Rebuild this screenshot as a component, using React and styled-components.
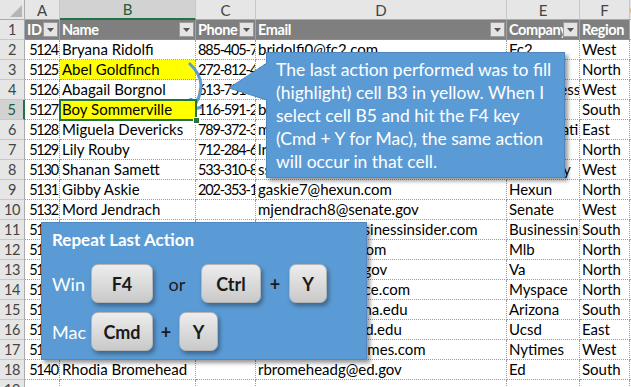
import React from "react";
import styled, { createGlobalStyle } from "styled-components";

const GlobalStyle = createGlobalStyle`
  html, body { margin: 0; padding: 0; background: #fff; }
  body { font-family: "Lato", "Liberation Sans", sans-serif; }
`;

const LETTERS = ["A", "B", "C", "D", "E", "F", "G"];
const HEADERS = ["ID", "Name", "Phone", "Email", "Company", "Region"];

const ROWS = [
	[5124, "Bryana Ridolfi", "885-405-7294", "bridolfi0@fc2.com", "Fc2", "West"],
	[5125, "Abel Goldfinch", "272-812-4410", "dgoldfinch1@google.cn", "Google", "North"],
	[5126, "Abagail Borgnol", "613-751-0935", "aborgnol2@wordpress.com", "Wordpress", "West"],
	[5127, "Boy Sommerville", "116-591-2306", "bsommerville3@tiny.cc", "Tiny", "South"],
	[5128, "Miguela Devericks", "789-372-3568", "mdevericks4@technorati.com", "Technorati", "East"],
	[5129, "Lily Rouby", "712-284-6120", "lrouby5@lycos.com", "Lycos", "North"],
	[5130, "Shanan Samett", "533-310-8823", "ssamett6@usatoday.com", "Usatoday", "West"],
	[5131, "Gibby Askie", "202-353-1947", "gaskie7@hexun.com", "Hexun", "North"],
	[5132, "Mord Jendrach", "", "mjendrach8@senate.gov", "Senate", "West"],
	[5133, "Tamar Crossfield", "418-220-5391", "tcrossfield9@businessinsider.com", "Businessinsider", "South"],
	[5134, "Bram Haggata", "", "bhaggata@mlb.com", "Mlb", "North"],
	[5135, "Gale Cardenas", "347-118-0072", "gcardenasb@va.gov", "Va", "North"],
	[5136, "Mia Doak", "", "mdoakc@myspace.com", "Myspace", "North"],
	[5137, "Lon Petrashko", "602-994-1185", "lpetrashd@arizona.edu", "Arizona", "South"],
	[5138, "Tess McGaughe", "", "tmcgaughe@ucsd.edu", "Ucsd", "East"],
	[5139, "Cy Brammer", "915-402-6638", "cbrammerf@nytimes.com", "Nytimes", "West"],
	[5140, "Rhodia Bromehead", "", "rbromeheadg@ed.gov", "Ed", "South"],
	["", "", "", "", "", ""],
];

export default function App() {
	return (
		<>
			<GlobalStyle />
			<Sheet>
				<Corner>
					<svg width="12" height="12" viewBox="0 0 12 12">
						<polygon points="12,0 12,12 0,12" fill="#b5b5b5" />
					</svg>
				</Corner>
				{LETTERS.map((l) => (
					<ColHead key={l} $sel={l === "B"}>{l}</ColHead>
				))}

				<RowNum>1</RowNum>
				{HEADERS.map((h, i) => (
					<HeadCell key={h}>
						<span>{h}</span>
						{i < 5 && (
							<FilterBtn>
								<svg width="7" height="4" viewBox="0 0 7 4">
									<polygon points="0,0 7,0 3.5,4" fill="#555" />
								</svg>
							</FilterBtn>
						)}
					</HeadCell>
				))}
				<Cell />

				{ROWS.map((r, i) => {
					const n = i + 2;
					return (
						<React.Fragment key={n}>
							<RowNum $sel={n === 5}>{n}</RowNum>
							<Cell $right $num>{r[0]}</Cell>
							<Cell $fill={n === 3 || n === 5} $active={n === 5}>{r[1]}</Cell>
							<Cell $num>{r[2]}</Cell>
							<Cell>{r[3]}</Cell>
							<Cell>{r[4]}</Cell>
							<Cell>{r[5]}</Cell>
							<Cell />
						</React.Fragment>
					);
				})}

				<Arrow width="631" height="387" viewBox="0 0 631 387">
					<path d="M189 63 Q 212 84 191 110" fill="none" stroke="#5b9bd5" strokeWidth="3" />
					<polyline points="191,98 190,110 202,107" fill="none" stroke="#5b9bd5" strokeWidth="3" strokeLinejoin="miter" />
				</Arrow>

				<Note>
					<Pointer width="41" height="60" viewBox="0 0 41 60">
						<polygon points="41,9 1,35 41,48" fill="#5b9bd5" />
						<polyline points="39,10 1,35 39,47" fill="none" stroke="#4f86bd" strokeWidth="1" />
					</Pointer>
					<Line>The last action performed was to fill</Line>
					<Line>(highlight) cell B3 in yellow. When I</Line>
					<Line>select cell B5 and hit the F4 key</Line>
					<Line>(Cmd + Y for Mac), the same action</Line>
					<Line>will occur in that cell.</Line>
				</Note>

				<ShortcutBox>
					<Title>Repeat Last Action</Title>
					<KeyRow>
						<Label>Win</Label>
						<Key $w={62}>F4</Key>
						<Op $w={48}>or</Op>
						<Key $w={60}>Ctrl</Key>
						<Op $w={28} $bold>+</Op>
						<Key $w={38}>Y</Key>
					</KeyRow>
					<KeyRow $gap={9}>
						<Label>Mac</Label>
						<Key $w={62}>Cmd</Key>
						<Op $w={26} $bold>+</Op>
						<Key $w={39}>Y</Key>
					</KeyRow>
				</ShortcutBox>
			</Sheet>
		</>
	);
}

const Sheet = styled.div`
	position: relative;
	width: 631px;
	height: 387px;
	overflow: hidden;
	display: grid;
	grid-template-columns: 25px 35px 136px 60px 251px 73px 50px 1fr;
	grid-auto-rows: 20px;
	font-size: 15px;
	color: #000;
`;

const Corner = styled.div`
	background: #e6e6e6;
	border-right: 1px solid #ababab;
	border-bottom: 1px solid #ababab;
	display: flex;
	align-items: flex-end;
	justify-content: flex-end;
	padding: 0 2px 2px 0;
	box-sizing: border-box;
`;

const ColHead = styled.div`
	background: ${(p) => (p.$sel ? "#d2d2d2" : "#e6e6e6")};
	color: ${(p) => (p.$sel ? "#1f5c38" : "#444")};
	border-right: 1px solid #c8c8c8;
	border-bottom: ${(p) => (p.$sel ? "2px solid #217346" : "1px solid #ababab")};
	box-sizing: border-box;
	display: flex;
	align-items: center;
	justify-content: center;
	font-size: 15px;
`;

const RowNum = styled.div`
	background: ${(p) => (p.$sel ? "#d2d2d2" : "#e6e6e6")};
	color: ${(p) => (p.$sel ? "#1f5c38" : "#444")};
	border-right: ${(p) => (p.$sel ? "2px solid #217346" : "1px solid #ababab")};
	border-bottom: 1px solid #c8c8c8;
	box-sizing: border-box;
	display: flex;
	align-items: center;
	justify-content: center;
	font-size: 14.5px;
	letter-spacing: -0.5px;
`;

const HeadCell = styled.div`
	background: #7f7f7f;
	color: #fff;
	font-weight: 700;
	font-size: 14.5px;
	letter-spacing: -0.4px;
	border-right: 1px solid #a3a3a3;
	border-bottom: 1px solid #8c8c8c;
	box-sizing: border-box;
	display: flex;
	align-items: center;
	padding: 0 1px 0 2px;
	overflow: hidden;
	white-space: nowrap;

	span {
		flex: 1;
		overflow: hidden;
	}
`;

const FilterBtn = styled.div`
	flex: none;
	width: 15px;
	height: 15px;
	background: #e4e4e4;
	border: 1px solid #9c9c9c;
	box-sizing: border-box;
	display: flex;
	align-items: center;
	justify-content: center;
`;

const Cell = styled.div`
	position: relative;
	background: ${(p) => (p.$fill ? "#ffff00" : "#fff")};
	border-right: 1px dotted #9a9a9a;
	border-bottom: 1px dotted #9a9a9a;
	box-sizing: border-box;
	padding: 0 ${(p) => (p.$right ? 1 : 2)}px 0 2px;
	line-height: 19px;
	font-size: ${(p) => (p.$num ? 14.5 : 15)}px;
	letter-spacing: ${(p) => (p.$num ? -1.2 : 0)}px;
	text-align: ${(p) => (p.$right ? "right" : "left")};
	white-space: nowrap;
	overflow: ${(p) => (p.$active ? "visible" : "hidden")};
	${(p) =>
		p.$active &&
		`
		z-index: 1;
		outline: 2px solid #217346;
		outline-offset: -1px;
		&::after {
			content: "";
			position: absolute;
			right: -5px;
			bottom: -5px;
			width: 5px;
			height: 5px;
			background: #217346;
			border: 1px solid #fff;
		}
	`}
`;

const Arrow = styled.svg`
	position: absolute;
	left: 0;
	top: 0;
	pointer-events: none;
`;

const Note = styled.div`
	position: absolute;
	left: 266px;
	top: 52px;
	width: 299px;
	height: 126px;
	box-sizing: border-box;
	padding: 5px 0 0 9px;
	background: #5b9bd5;
	border: 1px solid #4f86bd;
	box-shadow: 3px 3px 4px rgba(0, 0, 0, 0.4);
	color: #fff;
	font-size: 17.5px;
	line-height: 23px;
	z-index: 2;
`;

const Pointer = styled.svg`
	position: absolute;
	left: -39px;
	top: 0;
`;

const Line = styled.div`
	white-space: nowrap;
`;

const ShortcutBox = styled.div`
	position: absolute;
	left: 41px;
	top: 222px;
	width: 326px;
	height: 138px;
	box-sizing: border-box;
	padding: 6px 0 0 10px;
	background: #5b9bd5;
	border: 1px solid #4f86bd;
	box-shadow: 3px 3px 4px rgba(0, 0, 0, 0.4);
	color: #fff;
	z-index: 2;
`;

const Title = styled.div`
	font-size: 17px;
	font-weight: 700;
	line-height: 22px;
`;

const KeyRow = styled.div`
	display: flex;
	align-items: center;
	height: 39px;
	margin-top: ${(p) => p.$gap ?? 13}px;
`;

const Label = styled.div`
	width: 39px;
	font-size: 18px;
`;

const Key = styled.div`
	width: ${(p) => p.$w}px;
	height: 39px;
	box-sizing: border-box;
	border-radius: 7px;
	border: 1px solid #b4b4b4;
	background: linear-gradient(#ededed, #c9c9c9);
	box-shadow: 2px 3px 4px rgba(0, 0, 0, 0.35);
	display: flex;
	align-items: center;
	justify-content: center;
	color: #1a1a1a;
	font-size: 18px;
	font-weight: 700;
`;

const Op = styled.div`
	width: ${(p) => p.$w}px;
	text-align: center;
	color: #1a1a1a;
	font-size: 18px;
	font-weight: ${(p) => (p.$bold ? 700 : 400)};
`;
